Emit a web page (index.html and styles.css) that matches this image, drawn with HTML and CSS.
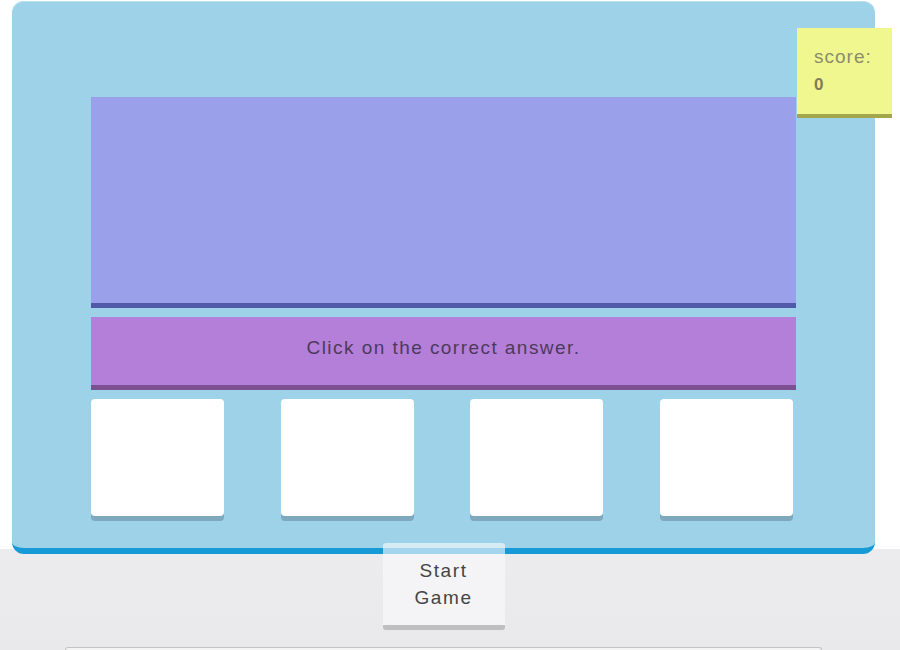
FILE: index.html
```html
<!DOCTYPE html>
<html>
<head>
<meta charset="utf-8">
<link rel="stylesheet" href="styles.css">
</head>
<body>
<div class="page">
  <div class="panel">
    <div class="question"></div>
    <div class="prompt">Click on the correct answer.</div>
    <div class="answers">
      <div class="card"></div>
      <div class="card"></div>
      <div class="card"></div>
      <div class="card"></div>
    </div>
    <div class="score">
      <div class="score-label">score:</div>
      <div class="score-value">0</div>
    </div>
  </div>
  <div class="controls">
    <button class="start">Start<br>Game</button>
  </div>
  <div class="footer-box"></div>
</div>
</body>
</html>
```
FILE: styles.css
```css
html, body {
  margin: 0;
  padding: 0;
}
body {
  width: 900px;
  height: 650px;
  overflow: hidden;
  font-family: "Liberation Sans", Arial, sans-serif;
  background: linear-gradient(to bottom, #ffffff 0, #ffffff 549px, #ececee 549px, #e9e9eb 650px);
}
.page {
  padding-top: 1px;
}
.panel {
  position: relative;
  margin-left: 12px;
  width: 863px;
  height: 553px;
  box-sizing: border-box;
  padding: 96px 0 0 79px;
  background: #9ed2e9;
  border-bottom: 6px solid #189ad7;
  border-radius: 12px;
  box-shadow: inset 0 1px 0 #b9e0f0;
}
.question {
  width: 705px;
  height: 206px;
  background: #9aa1ea;
  border-bottom: 5px solid #5159a9;
}
.prompt {
  margin-top: 9px;
  width: 705px;
  height: 62px;
  padding-bottom: 6px;
  background: #b47fd8;
  border-bottom: 5px solid #7d5191;
  display: flex;
  align-items: center;
  justify-content: center;
  color: #4c3a5c;
  font-size: 19px;
  letter-spacing: 1.45px;
}
.answers {
  margin-top: 9px;
  display: flex;
  gap: 56.5px;
}
.card {
  width: 133px;
  height: 117px;
  background: #ffffff;
  border-radius: 4px;
  box-shadow: 0 5px 0 #7ea8be;
}
.score {
  position: absolute;
  left: 785px;
  top: 27px;
  width: 95px;
  height: 90px;
  box-sizing: border-box;
  padding: 18px 0 0 17px;
  background: #f1f78f;
  border-bottom: 4px solid #a2a74c;
  color: #8b8c6c;
}
.score-label {
  font-size: 19px;
  letter-spacing: 1px;
  line-height: 22px;
}
.score-value {
  margin-top: 8px;
  font-size: 17px;
  font-weight: bold;
  color: #7d7e5a;
  line-height: 18px;
}
.controls {
  display: flex;
  justify-content: center;
  width: 887px;
  margin-top: -11px;
}
.start {
  position: relative;
  width: 122px;
  height: 87px;
  margin: 0;
  padding: 2px 0 2px 0;
  border: none;
  border-bottom: 5px solid #bfbfc1;
  border-radius: 3px;
  background: rgba(250, 250, 252, 0.62);
  font-family: "Liberation Sans", Arial, sans-serif;
  font-size: 19px;
  letter-spacing: 1.6px;
  line-height: 27px;
  color: #454545;
}
.footer-box {
  margin: 17px 0 0 65px;
  width: 755px;
  height: 2px;
  border: 1px solid #c4c4c6;
  border-bottom: none;
  border-radius: 4px 4px 0 0;
  background: #f4f4f5;
}
```
